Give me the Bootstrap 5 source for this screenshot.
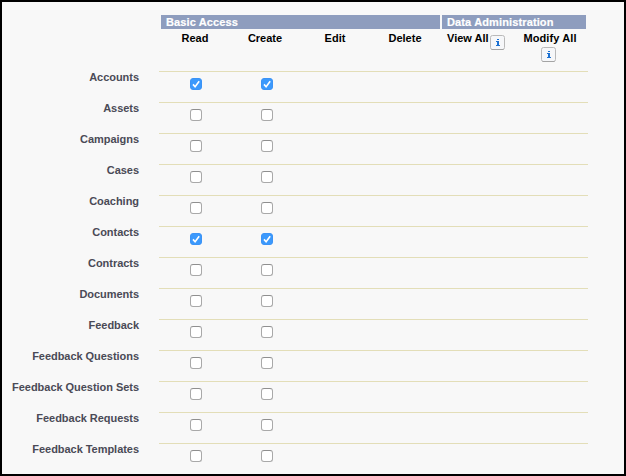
<!DOCTYPE html>
<html lang="en">
<head>
<meta charset="utf-8">
<meta name="viewport" content="width=device-width, initial-scale=1">
<title>Object Permissions</title>
<link rel="stylesheet" href="https://cdn.jsdelivr.net/npm/bootstrap@5.3.0/dist/css/bootstrap.min.css">
<style>
body{font-family:"Liberation Sans",Arial,sans-serif;font-size:11px;line-height:14px;background:#f8f8f8;color:#000}
.frame{height:476px;border:2px solid #000!important;padding-top:13px}
.head-row{margin-left:159px;gap:2px;height:14px}
.group-head{background:#8e9dbe;color:#fff;padding-left:5px;letter-spacing:.13px;-webkit-text-stroke:.2px #fff}
.group-basic{width:279px}
.group-admin{width:144px}
.sub-row{margin-left:158px;height:42px;padding-top:2px}
.sub-col{width:70px}
.sub-view{width:77px;padding-left:7px;gap:1px}
.sub-modify{width:66px;letter-spacing:.1px}
.info{display:block;flex:none;width:15px;height:15px}
.sub-view .info{margin-top:4px}
.sub-modify .info{margin:2px 4px 0 0}
.object-row{height:31px}
.object-name{width:137px;color:#4a4a56;margin-top:-1px;letter-spacing:-.04px}
.perm-cells{width:429px;margin-left:20px;border-top:1px solid #e3deb8;padding:6px 0 0 31px;gap:59px}
.perm-cells .form-check-input{width:12px;height:12px;margin:0;border:1px solid #a9a9a9;border-top-color:#8f8f8f;border-radius:3px;background-color:#fff;box-shadow:none;flex:none}
.perm-cells .form-check-input:checked{background-color:#3b99fc;border-color:#3b93f6;background-image:none}
.tick{width:12px;height:12px;margin-left:-71px;pointer-events:none}
</style>
<script src="https://cdn.jsdelivr.net/npm/bootstrap@5.3.0/dist/js/bootstrap.bundle.min.js"></script>
</head>
<body>
<main class="frame overflow-hidden">
  <div class="head-row d-flex fw-bold">
    <div class="group-head group-basic">Basic Access</div>
    <div class="group-head group-admin">Data Administration</div>
  </div>
  <div class="sub-row d-flex fw-bold text-center">
    <div class="sub-col">Read</div>
    <div class="sub-col">Create</div>
    <div class="sub-col">Edit</div>
    <div class="sub-col">Delete</div>
    <div class="sub-view d-flex text-nowrap">View All
      <svg class="info" viewBox="0 0 15 15"><rect x=".5" y=".5" width="14" height="14" rx="2" fill="#f6f7f9" stroke="#b9b9b9"/><path d="M1.5 14.5h12" stroke="#a4a4a4"/><path d="M7 4h2v1H7zM6 6h3v4h1v1H6v-1h1V7H6z" fill="#1c71d2"/></svg>
    </div>
    <div class="sub-modify d-flex flex-column align-items-center text-nowrap">Modify All
      <svg class="info" viewBox="0 0 15 15"><rect x=".5" y=".5" width="14" height="14" rx="2" fill="#f6f7f9" stroke="#b9b9b9"/><path d="M1.5 14.5h12" stroke="#a4a4a4"/><path d="M7 4h2v1H7zM6 6h3v4h1v1H6v-1h1V7H6z" fill="#1c71d2"/></svg>
    </div>
  </div>
  <div id="objects"></div>
</main>
<script>
const objects = ["Accounts","Assets","Campaigns","Cases","Coaching","Contacts","Contracts","Documents","Feedback","Feedback Questions","Feedback Question Sets","Feedback Requests","Feedback Templates"];
const granted = ["Accounts","Contacts"];
const tick = '<path d="M3 6.4 5.1 8.8 9.2 3.2" fill="none" stroke="#fff" stroke-width="1.6"/>';
document.getElementById("objects").innerHTML = objects.map(name => {
  const on = granted.includes(name);
  const box = perm => `<input class="form-check-input" type="checkbox" aria-label="${perm} ${name}"${on ? " checked" : ""}>` + (on ? `<svg class="tick" viewBox="0 0 12 12">${tick}</svg>` : "");
  return `<div class="object-row d-flex"><div class="object-name fw-bold text-end text-nowrap">${name}</div><div class="perm-cells d-flex">${box("Read")}${box("Create")}</div></div>`;
}).join("");
</script>
</body>
</html>
